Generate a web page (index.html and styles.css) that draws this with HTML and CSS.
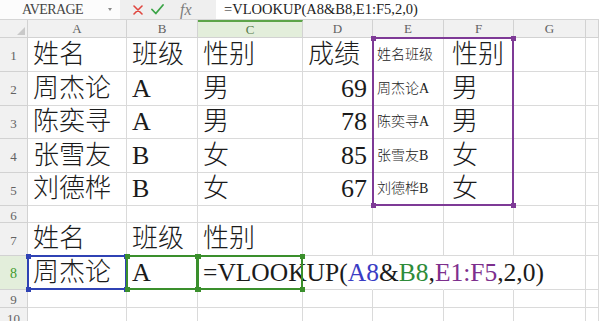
FILE: index.html
```html
<!DOCTYPE html>
<html lang="zh-CN">
<head>
<meta charset="utf-8">
<title>VLOOKUP</title>
<link rel="stylesheet" href="styles.css">
</head>
<body>
<div class="toolbar">
  <div class="namebox"><span class="name">AVERAGE</span><span class="caret"></span></div>
  <div class="fxbtns">
    <svg class="ic-x" width="10" height="10" viewBox="0 0 10 10"><path d="M1 1 L9 9 M9 1 L1 9" stroke="#e0463f" stroke-width="1.6" fill="none" stroke-linecap="round"/></svg>
    <svg class="ic-ok" width="13" height="11" viewBox="0 0 13 11"><path d="M1 5.5 L4.8 9.5 L12 1" stroke="#3ba447" stroke-width="1.8" fill="none" stroke-linecap="round" stroke-linejoin="round"/></svg>
    <span class="fx">fx</span>
  </div>
  <div class="formula">=VLOOKUP(A8&amp;B8,E1:F5,2,0)</div>
</div>
<div class="sheet">
  <div class="c h corner"><svg width="8" height="8" viewBox="0 0 8 8"><polygon points="8,0 8,8 0,8" fill="#c9c9c9"/></svg></div>
  <div class="c h">A</div><div class="c h">B</div><div class="c h on">C</div><div class="c h">D</div><div class="c h">E</div><div class="c h">F</div><div class="c h">G</div><div class="c h"></div>

  <div class="c rh">1</div><div class="c">姓名</div><div class="c">班级</div><div class="c">性别</div><div class="c">成绩</div><div class="c sm">姓名班级</div><div class="c f">性别</div><div class="c"></div><div class="c"></div>
  <div class="c rh">2</div><div class="c">周杰论</div><div class="c">A</div><div class="c">男</div><div class="c num">69</div><div class="c sm">周杰论A</div><div class="c f">男</div><div class="c"></div><div class="c"></div>
  <div class="c rh">3</div><div class="c">陈奕寻</div><div class="c">A</div><div class="c">男</div><div class="c num">78</div><div class="c sm">陈奕寻A</div><div class="c f">男</div><div class="c"></div><div class="c"></div>
  <div class="c rh">4</div><div class="c">张雪友</div><div class="c">B</div><div class="c">女</div><div class="c num">85</div><div class="c sm">张雪友B</div><div class="c f">女</div><div class="c"></div><div class="c"></div>
  <div class="c rh">5</div><div class="c">刘德桦</div><div class="c">B</div><div class="c">女</div><div class="c num">67</div><div class="c sm">刘德桦B</div><div class="c f">女</div><div class="c"></div><div class="c"></div>
  <div class="c rh">6</div><div class="c"></div><div class="c"></div><div class="c"></div><div class="c"></div><div class="c"></div><div class="c"></div><div class="c"></div><div class="c"></div>
  <div class="c rh">7</div><div class="c">姓名</div><div class="c">班级</div><div class="c">性别</div><div class="c"></div><div class="c"></div><div class="c"></div><div class="c"></div><div class="c"></div>
  <div class="c rh on">8</div><div class="c">周杰论</div><div class="c">A</div><div class="c nob fml"><span>=VLOOKUP(</span><span class="ref-a">A8</span><span>&amp;</span><span class="ref-b">B8</span><span>,</span><span class="ref-e">E1:F5</span><span>,2,0)</span></div><div class="c nob"></div><div class="c nob"></div><div class="c nob"></div><div class="c"></div><div class="c"></div>
  <div class="c rh">9</div><div class="c"></div><div class="c"></div><div class="c"></div><div class="c"></div><div class="c"></div><div class="c"></div><div class="c"></div><div class="c"></div>
  <div class="c rh last">10</div><div class="c"></div><div class="c"></div><div class="c"></div><div class="c"></div><div class="c"></div><div class="c"></div><div class="c"></div><div class="c"></div>

  <div class="box rng"><i class="hd tl"></i><i class="hd tr"></i><i class="hd bl"></i><i class="hd br"></i></div>
  <div class="box sel-a"><i class="hd tl"></i><i class="hd tr"></i><i class="hd bl"></i><i class="hd br"></i></div>
  <div class="box sel-b"><i class="hd tl"></i><i class="hd tr"></i><i class="hd bl"></i><i class="hd br"></i></div>
  <div class="box sel-c"><i class="hd tl"></i><i class="hd tr"></i><i class="hd bl"></i><i class="hd br"></i></div>
</div>
</body>
</html>
```

FILE: styles.css
```css
* { box-sizing: border-box; }

body {
  margin: 0;
  width: 599px;
  height: 321px;
  overflow: hidden;
  background: #fff;
  font-family: "Liberation Serif", "Noto Sans CJK SC", serif;
}

/* ---------- formula toolbar ---------- */
.toolbar {
  display: flex;
  height: 20px;
  border-bottom: 1px solid #d5d5d5;
  background: #f6f6f6;
}

.namebox {
  width: 120px;
  display: flex;
  align-items: center;
  padding-left: 22px;
  background: #fcfcfc;
}

.name {
  flex: 1;
  font-size: 14px;
  letter-spacing: -0.6px;
  color: #444;
}

.caret {
  width: 0;
  height: 0;
  margin-right: 8px;
  border-left: 2.5px solid transparent;
  border-right: 2.5px solid transparent;
  border-top: 3px solid #8a8a8a;
}

.fxbtns {
  width: 96px;
  display: flex;
  align-items: center;
  padding-left: 13px;
  background: #efefef;
}

.ic-ok { margin-left: 8px; }

.fx {
  margin-left: 16px;
  font-size: 16px;
  font-style: italic;
  color: #7c7c7c;
  line-height: 1;
}

.formula {
  flex: 1;
  display: flex;
  align-items: center;
  padding-left: 8px;
  background: #fff;
  font-size: 14.5px;
  color: #222;
  white-space: nowrap;
}

/* ---------- sheet grid ---------- */
.sheet {
  position: relative;
  display: grid;
  grid-template-columns: 28px 99px 71px 105px 70px 71px 70px 72px 1fr;
  grid-template-rows: 18px 34px 34px 33px 34px 33px 17px 33px 34px 18px 20px;
}

.c {
  display: flex;
  align-items: center;
  padding: 0 4px 0 5px;
  border-right: 1px solid #dadada;
  border-bottom: 1px solid #dadada;
  font-size: 26px;
  font-weight: 300;
  line-height: 1;
  white-space: nowrap;
  color: #1b1b1b;
}

.h,
.rh {
  justify-content: center;
  padding: 0;
  background: #f1f1f1;
  border-color: #d2d2d2;
  font-size: 13px;
  font-weight: 400;
  color: #626262;
}

.rh { padding-top: 2px; }

.rh.last { align-items: flex-start; padding-top: 4px; }

.h.on {
  background: #e3eedb;
  border-top: 2px solid #5ca448;
  color: #557c48;
}

.rh.on {
  background: #e3eedb;
  border-right-color: #8cc377;
  color: #3f9a2c;
  font-size: 14px;
}

.corner {
  justify-content: flex-end;
  align-items: flex-end;
  padding: 0 2px 2px 0;
}

.corner svg { display: block; }

.num { justify-content: flex-end; padding-right: 5px; }

.sm { font-size: 14px; padding-left: 4px; }

.f { padding-left: 8px; }

.nob { border-right-color: transparent; }

.fml {
  overflow: visible;
  font-size: 25.5px;
  font-weight: 400;
  color: #1b1b1b;
}

.ref-a { color: #3a3cc4; }
.ref-b { color: #2e8c3a; }
.ref-e { color: #7d2f8d; }

/* ---------- reference / selection outlines ---------- */
.box {
  position: absolute;
  top: -1px;
  left: -1px;
  right: 0;
  bottom: 0;
  border: 2px solid currentColor;
  pointer-events: none;
}

.rng   { grid-column: 6 / 8; grid-row: 2 / 7;  color: #7e3a96; }
.sel-a { grid-column: 2 / 3; grid-row: 9 / 10; color: #2f42b4; }
.sel-b { grid-column: 3 / 4; grid-row: 9 / 10; color: #3a8f2c; }
.sel-c { grid-column: 4 / 5; grid-row: 9 / 10; color: #3a8f2c; }

.hd {
  position: absolute;
  width: 5px;
  height: 5px;
  background: currentColor;
}

.tl { left: -3.5px; top: -3.5px; }
.tr { right: -3.5px; top: -3.5px; }
.bl { left: -3.5px; bottom: -3.5px; }
.br { right: -3.5px; bottom: -3.5px; }
```
